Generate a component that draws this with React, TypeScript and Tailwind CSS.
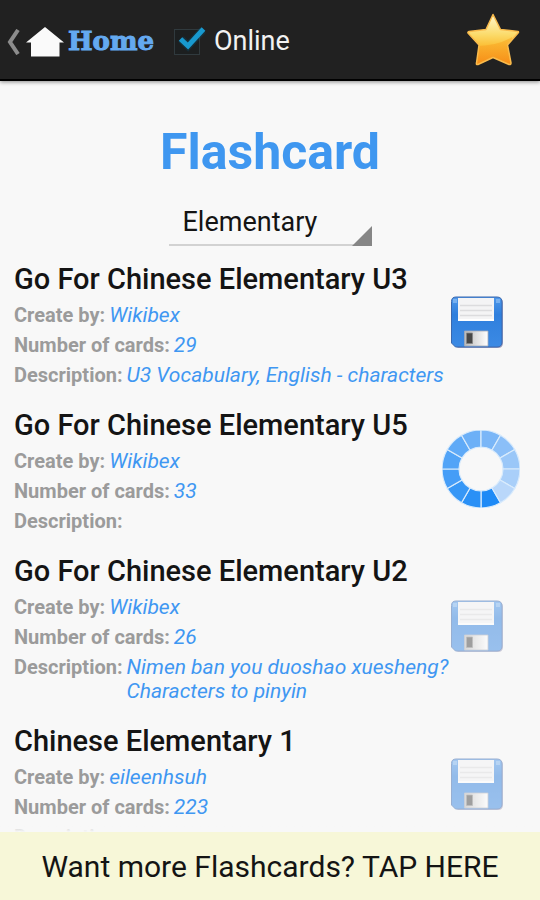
import { useState } from "react";

type DeckStatus = "available" | "loading" | "saved";

interface Deck {
  id: number;
  title: string;
  author: string;
  cards: number;
  description: string;
  status: DeckStatus;
}

const DECKS: Deck[] = [
  {
    id: 1,
    title: "Go For Chinese Elementary U3",
    author: "Wikibex",
    cards: 29,
    description: "U3 Vocabulary, English - characters",
    status: "available",
  },
  {
    id: 2,
    title: "Go For Chinese Elementary U5",
    author: "Wikibex",
    cards: 33,
    description: "",
    status: "loading",
  },
  {
    id: 3,
    title: "Go For Chinese Elementary U2",
    author: "Wikibex",
    cards: 26,
    description: "Nimen ban you duoshao xuesheng? Characters to pinyin",
    status: "saved",
  },
  {
    id: 4,
    title: "Chinese Elementary 1",
    author: "eileenhsuh",
    cards: 223,
    description: "",
    status: "saved",
  },
];

const SEGMENT_COLORS = [
  "#1e8af6",
  "#2a90f6",
  "#3797f6",
  "#459df7",
  "#52a4f7",
  "#5faaf7",
  "#6cb0f7",
  "#7ab6f7",
  "#8bbff8",
  "#9ac7f8",
  "#a9cff9",
  "#b9d7fa",
];

function segmentPath(start: number) {
  const point = (radius: number, degrees: number) => {
    const a = (degrees * Math.PI) / 180;
    return `${(39 + radius * Math.sin(a)).toFixed(2)} ${(39 - radius * Math.cos(a)).toFixed(2)}`;
  };
  const end = start + 30;
  return `M${point(39, start)}A39 39 0 0 1 ${point(39, end)}L${point(22, end)}A22 22 0 0 0 ${point(22, start)}Z`;
}

function Spinner() {
  return (
    <svg viewBox="0 0 78 78" className="size-[78px]" role="img" aria-label="Loading">
      {SEGMENT_COLORS.map((color, i) => (
        <path key={color} d={segmentPath(150 + i * 30)} fill={color} stroke="#d9ebfc" strokeWidth="1.2" />
      ))}
    </svg>
  );
}

function FloppyIcon() {
  return (
    <svg viewBox="0 0 54 54" className="size-[54px]" aria-hidden="true">
      <defs>
        <linearGradient id="floppy-body" x1="0" y1="0" x2="0" y2="1">
          <stop offset="0" stopColor="#4f98ea" />
          <stop offset="0.35" stopColor="#2f7fdd" />
          <stop offset="1" stopColor="#3c8ae4" />
        </linearGradient>
        <linearGradient id="floppy-shutter" x1="0" y1="0" x2="1" y2="0">
          <stop offset="0" stopColor="#b9b9b9" />
          <stop offset="0.5" stopColor="#dedede" />
          <stop offset="1" stopColor="#ffffff" />
        </linearGradient>
      </defs>
      <path d="M6 2H48Q53 2 53 7V47Q53 52 48 52H8L3 48V6Q3 2 6 2Z" fill="#6f6a98" opacity="0.6" />
      <path
        d="M6 1H47Q52 1 52 6V46Q52 51 47 51H5.500L1.500 47V5.500Q1.500 1 6 1Z"
        fill="url(#floppy-body)"
        stroke="#3b68ae"
        strokeWidth="1"
      />
      <path d="M3 3H7V7H3ZM46 3H50V7H46Z" fill="#8bbdf4" opacity="0.7" />
      <path d="M8 2H44V25H8Z" fill="#f4f4f5" />
      <path d="M10 9.500H42M10 14.500H42M10 19.500H42" stroke="#dcdcde" strokeWidth="1.300" />
      <path d="M8 24H44" stroke="#ffffff" strokeWidth="2" />
      <path d="M14.500 35H38V50H14.500Z" fill="url(#floppy-shutter)" stroke="#a4a9b6" strokeWidth="0.800" />
      <path d="M16.500 37H22.500V47.500H16.500Z" fill="#474747" stroke="#858585" strokeWidth="0.800" />
    </svg>
  );
}

function HomeIcon() {
  return (
    <svg viewBox="0 0 38 30" className="h-[30px] w-[38px]" aria-hidden="true">
      <path d="M19 0L38 15.500H33.500V29.500H5V15.500H0Z" fill="#fafafa" />
    </svg>
  );
}

function StarIcon() {
  const outline =
    "M26 1.500L33.500 16.500L51 18.500Q52 19 51 20L40.500 32L44 50Q44 52 42 51.500L26 44.500L11 51.500Q9 52 9.500 50L12 32L1 20Q0.500 19 2 18.500L19 16.500Z";
  return (
    <svg viewBox="0 0 53 53" className="size-[53px]" aria-hidden="true">
      <defs>
        <linearGradient id="star-fill" x1="0" y1="0" x2="0" y2="1">
          <stop offset="0" stopColor="#fff8cf" />
          <stop offset="0.4" stopColor="#fbdb6b" />
          <stop offset="0.6" stopColor="#fbc23c" />
          <stop offset="1" stopColor="#f58a17" />
        </linearGradient>
        <linearGradient id="star-shade" x1="0" y1="0" x2="0" y2="1">
          <stop offset="0" stopColor="#fab52e" />
          <stop offset="1" stopColor="#f78c16" />
        </linearGradient>
        <clipPath id="star-clip">
          <path d={outline} />
        </clipPath>
      </defs>
      <path d={outline} fill="url(#star-fill)" />
      <path d="M8 33Q30 33 45 24V53H6Z" fill="url(#star-shade)" opacity="0.7" clipPath="url(#star-clip)" />
      <path d={outline} fill="none" stroke="#f9bb4c" strokeWidth="1.500" strokeLinejoin="round" />
    </svg>
  );
}

function DeckAction({ deck }: { deck: Deck }) {
  if (deck.status === "loading") {
    return <Spinner />;
  }
  return (
    <button
      type="button"
      disabled={deck.status === "saved"}
      aria-label={`Save ${deck.title}`}
      className="ml-2 cursor-pointer disabled:cursor-default disabled:opacity-50"
    >
      <FloppyIcon />
    </button>
  );
}

function DeckItem({ deck }: { deck: Deck }) {
  return (
    <li className="flex items-center">
      <div className="-mr-2 min-w-0 flex-1">
        <h2 className="text-[29px] leading-[34px] font-medium text-[#141414]">{deck.title}</h2>
        <dl className="mt-[7px] flex flex-col gap-1.5 text-[21px] leading-6">
          <div className="flex gap-1">
            <dt className="text-[20px] font-bold text-[#9b9b9b]">Create by:</dt>
            <dd className="text-[#3f97f2] italic">{deck.author}</dd>
          </div>
          <div className="flex gap-1">
            <dt className="text-[20px] font-bold text-[#9b9b9b]">Number of cards:</dt>
            <dd className="text-[#3f97f2] italic">{deck.cards}</dd>
          </div>
          <div className="flex gap-1">
            <dt className="text-[20px] font-bold text-[#9b9b9b]">Description:</dt>
            <dd className="text-[#3f97f2] italic">{deck.description}</dd>
          </div>
        </dl>
      </div>
      <div className="mb-1 flex w-[78px] shrink-0">
        <DeckAction deck={deck} />
      </div>
    </li>
  );
}

export default function App() {
  const [online, setOnline] = useState(true);
  const [level, setLevel] = useState("Elementary");

  return (
    <div className="flex h-screen flex-col bg-[#f8f8f8] font-['Roboto',sans-serif] text-[#141414]">
      <header className="z-10 flex h-[81px] shrink-0 items-center border-b-2 border-black bg-[#212121] pt-1 pr-5 pl-1.5 shadow-[0_1px_4px_rgba(0,0,0,0.45)]">
        <a href="#home" className="flex items-center">
          <svg viewBox="0 0 14 26" className="h-[26px] w-3.5" aria-hidden="true">
            <path d="M12 1L4 13L12 25" fill="none" stroke="#8c8c8c" strokeWidth="4" />
          </svg>
          <span className="ml-1.5">
            <HomeIcon />
          </span>
          <span className="ml-1 font-['DejaVu_Serif',serif] text-[26px] font-bold text-[#64a9f0] [-webkit-text-stroke:1px_#64a9f0]">
            Home
          </span>
        </a>

        <label className="ml-5 flex cursor-pointer items-center gap-3.5 text-[27px] text-[#f2f2f2]">
          <span className="relative size-[26px]">
            <input
              type="checkbox"
              checked={online}
              onChange={(e) => setOnline(e.target.checked)}
              className="block size-[26px] appearance-none border border-[#303a3e] bg-[#1c1f20]"
            />
            {online && (
              <svg
                viewBox="0 0 32 28"
                className="pointer-events-none absolute -top-1 left-0.5 h-7 w-8"
                aria-hidden="true"
              >
                <path d="M5 14L12 21L27 5" fill="none" stroke="#0b4a66" strokeWidth="8" opacity="0.35" />
                <path d="M4.500 14L12 21L27.500 4" fill="none" stroke="#1899cf" strokeWidth="5" />
              </svg>
            )}
          </span>
          Online
        </label>

        <button type="button" aria-label="Favourites" className="mb-1 ml-auto cursor-pointer">
          <StarIcon />
        </button>
      </header>

      <main className="relative min-h-0 flex-1 overflow-hidden pt-[41px]">
        <h1 className="text-center text-[50px] leading-[60px] font-bold text-[#3f97f0]">Flashcard</h1>

        <div className="relative mx-auto mt-[18px] w-[203px]">
          <select
            aria-label="Level"
            value={level}
            onChange={(e) => setLevel(e.target.value)}
            className="block h-[46px] w-full appearance-none border-b-2 border-[#d2d2d2] bg-transparent pr-8 pl-3.5 text-[27px]"
          >
            <option>Elementary</option>
            <option>Intermediate</option>
            <option>Advanced</option>
          </select>
          <svg
            viewBox="0 0 20 20"
            className="pointer-events-none absolute right-0 bottom-0 size-5"
            aria-hidden="true"
          >
            <path d="M20 0V20H0Z" fill="#868686" />
          </svg>
        </div>

        <ul className="mt-4 flex flex-col gap-[21px] pr-5 pl-3.5">
          {DECKS.map((deck) => (
            <DeckItem key={deck.id} deck={deck} />
          ))}
        </ul>

        <div className="pointer-events-none absolute inset-x-0 bottom-0 h-3 bg-gradient-to-t from-[#f8f8f8] to-transparent" />
      </main>

      <a
        href="#more"
        className="z-10 flex h-[68px] shrink-0 items-center justify-center bg-[#f7f7d8] text-[30px] text-[#141414]"
      >
        Want more Flashcards? TAP HERE
      </a>
    </div>
  );
}
